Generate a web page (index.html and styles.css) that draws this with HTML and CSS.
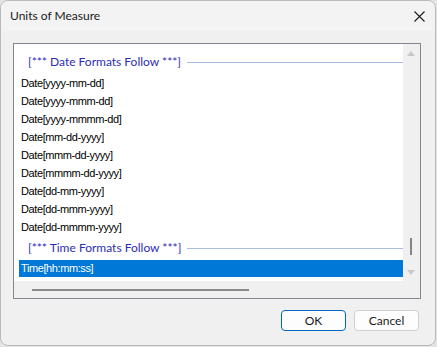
FILE: index.html
```html
<!DOCTYPE html>
<html lang="en">
<head>
  <meta charset="UTF-8" />
  <title>Units of Measure</title>
  <link rel="stylesheet" href="styles.css">
</head>
<body>

  <!-- Dialog -->
  <div class="dialog">
    <div class="titlebar">
      <div class="title">Units of Measure</div>
      <button class="close-btn" aria-label="Close">
        <svg width="11" height="11" viewBox="0 0 11 11">
          <path d="M0.5 0.5 L10.5 10.5 M10.5 0.5 L0.5 10.5" stroke="#1b1b1b" stroke-width="1.1" fill="none"/>
        </svg>
      </button>
    </div>

    <div class="dialog-body">
      <div class="listbox">
        <div class="list">
          <div class="group-head">[*** Date Formats Follow ***]</div>
          <div class="item">Date[yyyy-mm-dd]</div>
          <div class="item">Date[yyyy-mmm-dd]</div>
          <div class="item">Date[yyyy-mmmm-dd]</div>
          <div class="item">Date[mm-dd-yyyy]</div>
          <div class="item">Date[mmm-dd-yyyy]</div>
          <div class="item">Date[mmmm-dd-yyyy]</div>
          <div class="item">Date[dd-mm-yyyy]</div>
          <div class="item">Date[dd-mmm-yyyy]</div>
          <div class="item">Date[dd-mmmm-yyyy]</div>
          <div class="group-head">[*** Time Formats Follow ***]</div>
          <div class="item selected">Time[hh:mm:ss]</div>
        </div>
        <div class="vscroll">
          <span class="arrow-up"></span>
          <span class="vthumb"></span>
          <span class="arrow-down"></span>
        </div>
        <div class="hscroll">
          <span class="hthumb"></span>
        </div>
        <div class="corner"></div>
      </div>

      <div class="buttons">
        <button class="btn default">OK</button>
        <button class="btn">Cancel</button>
      </div>
    </div>
  </div>

</body>
</html>
```

FILE: styles.css
```css
* {
  box-sizing: border-box;
}

body {
  margin: 0;
  background: #e4e4e4;
  font-family: Lato, "Noto Sans", sans-serif;
}

.dialog {
  width: 436px;
  height: 346px;
  background: #f0f0f0;
  border: 1px solid #b9b9b9;
  border-radius: 8px;
  overflow: hidden;
  display: flex;
  flex-direction: column;
}

.titlebar {
  height: 30px;
  background: #f3f3f3;
  display: flex;
  align-items: center;
  justify-content: space-between;
  padding: 0 9px 0 9px;
}

.title {
  font-size: 12px;
  color: #1a1a1a;
  margin-top: -1px;
}

.close-btn {
  border: none;
  background: none;
  padding: 0;
  width: 11px;
  height: 11px;
  margin-right: 1px;
  display: flex;
}

.dialog-body {
  padding: 12px 15px 0 12px;
}

/* Listbox */
.listbox {
  width: 408px;
  height: 256px;
  border: 1px solid #82878f;
  display: grid;
  grid-template-columns: 1fr 17px;
  grid-template-rows: 1fr 17px;
  background: #f0f0f0;
}

.list {
  background: #fff;
  padding: 6px 0 0 5px;
  overflow: hidden;
}

.group-head {
  height: 24px;
  display: flex;
  align-items: center;
  padding-left: 9px;
  font-size: 12px;
  color: #2d2db4;
  padding-bottom: 1px;
}

.group-head::after {
  content: "";
  flex: 1;
  height: 1px;
  background: #a9bde3;
  margin-left: 6px;
  margin-top: 1px;
}

.item {
  height: 18px;
  line-height: 18px;
  padding-left: 2px;
  font-family: "Liberation Sans", Arial, sans-serif;
  font-size: 11px;
  letter-spacing: -0.4px;
  color: #000;
}

.item.selected {
  background: #0078d7;
  color: #fff;
  height: 17px;
  line-height: 17px;
}

.vscroll {
  position: relative;
  background: #f0f0f0;
}

.arrow-up,
.arrow-down {
  position: absolute;
  left: 4px;
  width: 0;
  height: 0;
  border-left: 4px solid transparent;
  border-right: 4px solid transparent;
}

.arrow-up {
  top: 7px;
  border-bottom: 5px solid #c9c9c9;
}

.arrow-down {
  bottom: 6px;
  border-top: 5px solid #c9c9c9;
}

.vthumb {
  position: absolute;
  left: 7px;
  top: 194px;
  width: 2px;
  height: 17px;
  background: #858585;
}

.hscroll {
  position: relative;
  background: #f0f0f0;
}

.hthumb {
  position: absolute;
  left: 18px;
  top: 8px;
  width: 217px;
  height: 2px;
  background: #8a8a8a;
}

.corner {
  background: #f0f0f0;
}

/* Buttons */
.buttons {
  display: flex;
  justify-content: flex-end;
  gap: 8px;
  margin-top: 11px;
  padding-right: 1px;
}

.btn {
  width: 65px;
  height: 21px;
  font-family: Lato, "Noto Sans", sans-serif;
  font-size: 12px;
  color: #1a1a1a;
  background: #fdfdfd;
  border: 1px solid #d0d0d0;
  border-radius: 4px;
  padding: 0;
}

.btn.default {
  border-color: #0067c0;
}
```
